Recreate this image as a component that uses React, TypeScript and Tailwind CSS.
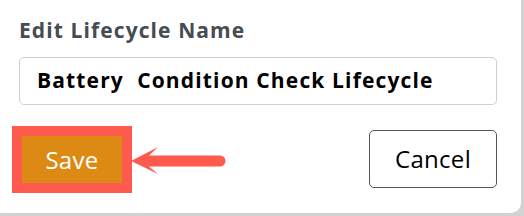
import React from "react";

export default function App() {
  return (
    <div className="w-[524px] h-[216px] bg-[#d2d2d2] overflow-hidden" style={{ fontFamily: '"Open Sans", "Liberation Sans", sans-serif' }}>
      <div className="w-[521px] h-[213px] bg-white rounded-br-[10px] pl-[19px] pr-[24px] pt-[16px]">
        <div className="text-[21px] font-bold text-[#464c54] leading-[28px] tracking-[1.1px]">Edit Lifecycle Name</div>
        <div className="mt-[13px] h-[48px] border border-[#cfcfcf] rounded-[5px] flex items-center pl-[17px]">
          <span className="text-[21px] font-bold text-black whitespace-pre tracking-[1.15px]">Battery  Condition Check Lifecycle</span>
        </div>
        <div className="mt-[21px] flex items-center justify-between">
          <div className="flex items-center -ml-[7px]">
            <div className="border-[10px] border-[#ff5a4e] bg-[#dd8a14] w-[120px] h-[67px] flex items-center justify-center">
              <span className="text-white text-[24px] leading-none tracking-[0.3px]">Save</span>
            </div>
            <svg width="96" height="40" viewBox="0 0 96 40" className="-ml-[1px]">
              <path d="M0 21 L27 7 L18 15.5 L89 15.5 A5.5 5.5 0 0 1 89 26.5 L18 26.5 L27 34 Z" fill="#ff5a4e" />
            </svg>
          </div>
          <div className="w-[128px] h-[58px] border border-[#555] rounded-[5px] flex items-center justify-center -mt-[1px]">
            <span className="text-black text-[24px] leading-none tracking-[0.3px]">Cancel</span>
          </div>
        </div>
      </div>
    </div>
  );
}
